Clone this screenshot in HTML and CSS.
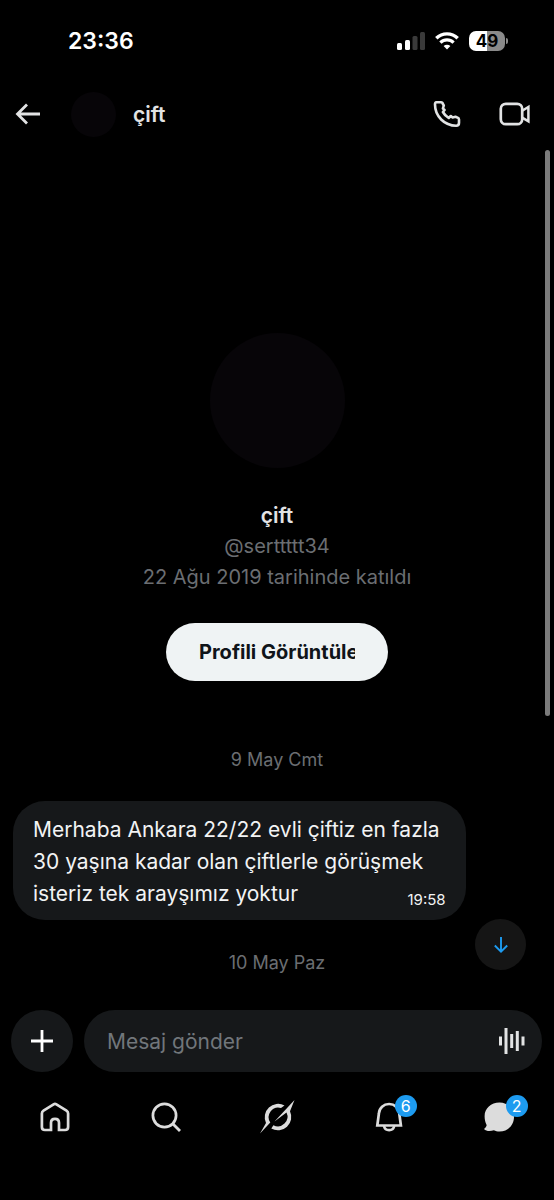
FILE: index.html
```html
<!DOCTYPE html>
<html lang="tr">
<head>
<meta charset="utf-8">
<meta name="viewport" content="width=device-width, initial-scale=1">
<title>çift</title>
<link rel="stylesheet" href="styles.css">
</head>
<body>
<div class="status">
  <time class="clock">23:36</time>
  <div class="status-icons">
    <svg class="signal" width="28" height="20" viewBox="0 0 28 20" aria-hidden="true">
      <rect x="0" y="12" width="5" height="7" rx="1.5" fill="#fff"/>
      <rect x="8" y="9" width="5" height="10" rx="1.5" fill="#fff"/>
      <rect x="15.500" y="5" width="5" height="14" rx="1.500" fill="#3a3a3a"/>
      <rect x="23" y="1" width="5" height="18" rx="1.500" fill="#3a3a3a"/>
    </svg>
    <svg class="wifi" width="24" height="18" viewBox="0 0 24 18" aria-hidden="true">
      <path d="M1.300 6.300a15.200 15.200 0 0 1 21.400 0" fill="none" stroke="#fff" stroke-width="3.400"/>
      <path d="M5.400 10.600a9.400 9.400 0 0 1 13.200 0" fill="none" stroke="#fff" stroke-width="3.200"/>
      <path d="M12 17.500l-3.400-3.500a4.900 4.900 0 0 1 6.800 0z" fill="#fff"/>
    </svg>
    <span class="battery">49</span>
  </div>
</div>

<header class="header">
  <button class="icon-button" type="button" aria-label="Geri">
    <svg width="28" height="28" viewBox="0 0 28 28"><path d="M26 14H4M13 4.500L3.500 14l9.500 9.500" fill="none" stroke="currentColor" stroke-width="2.800"/></svg>
  </button>
  <span class="avatar avatar-small"></span>
  <h1 class="title">çift</h1>
  <button class="icon-button call" type="button" aria-label="Sesli arama">
    <svg width="28" height="28" viewBox="0 0 28 28"><path d="M3.300 2.300H8C9.100 2.300 9.700 3 9.900 4L10.800 5.500L9.900 8.500L11.600 10L9.900 12C11.300 14.500 13.200 16.500 15.700 18L17.800 16L19.600 17.500L22.500 16.800L24.400 17.600C25.500 17.900 26 18.500 26 19.500V22.700C26 24.800 24.900 25.700 23.200 25.700C11.400 25.700 2 16.300 2 4.600C2 3.100 2.400 2.300 3.300 2.300Z" fill="none" stroke="currentColor" stroke-width="2.600" stroke-linejoin="round"/></svg>
  </button>
  <button class="icon-button" type="button" aria-label="Görüntülü arama">
    <svg width="32" height="28" viewBox="0 0 32 28"><rect x="1.800" y="3.800" width="21.400" height="20.400" rx="5" fill="none" stroke="currentColor" stroke-width="2.700"/><path d="M23.200 10.700L29.400 7V21.300L23.200 17.600" fill="none" stroke="currentColor" stroke-width="2.500"/></svg>
  </button>
</header>

<main class="chat">
  <section class="profile">
    <span class="avatar avatar-large"></span>
    <h2 class="name">çift</h2>
    <p class="meta">@serttttt34</p>
    <p class="meta">22 Ağu 2019 tarihinde katıldı</p>
    <button class="profile-button" type="button"><span class="profile-label">Profili Görüntüle</span></button>
  </section>
  <p class="date">9 May Cmt</p>
  <article class="bubble">
    <p class="message">Merhaba Ankara 22/22 evli çiftiz en fazla<br>30 yaşına kadar olan çiftlerle görüşmek<br>isteriz tek arayşımız yoktur</p>
    <time class="sent">19:58</time>
  </article>
  <p class="date">10 May Paz</p>
  <button class="jump" type="button" aria-label="En alta git">
    <svg width="16" height="18" viewBox="0 0 16 18"><path d="M8 1v14.500M1.800 9.500L8 15.700l6.200-6.200" fill="none" stroke="currentColor" stroke-width="1.900"/></svg>
  </button>
  <span class="scrollbar"></span>
</main>

<form class="composer">
  <button class="add" type="button" aria-label="Ekle">
    <svg width="24" height="24" viewBox="0 0 24 24"><path d="M12 1v22M1 12h22" stroke="currentColor" stroke-width="2.800"/></svg>
  </button>
  <div class="field">
    <input class="input" type="text" placeholder="Mesaj gönder" aria-label="Mesaj gönder">
    <button class="icon-button" type="button" aria-label="Sesli mesaj">
      <svg width="28" height="28" viewBox="0 0 28 28"><path d="M2.500 9.500v9M8 1v26M13.700 7v14M19.300 4v20M25 9.500v9" stroke="currentColor" stroke-width="3"/></svg>
    </button>
  </div>
</form>

<nav class="tabs">
  <a class="tab" href="#home" aria-label="Ana sayfa">
    <svg width="32" height="32" viewBox="0 0 32 32"><path d="M14.600 3.400L4.500 9.700C3.400 10.400 2.900 11.300 2.900 12.500V26C2.900 28 3.900 29 5.900 29H12V21.800C12 19.300 13.500 17.900 16 17.900S20 19.300 20 21.800V29H26.100C28.100 29 29.100 28 29.100 26V12.500C29.100 11.300 28.600 10.400 27.500 9.700L17.400 3.400C16.400 2.800 15.600 2.800 14.600 3.400Z" fill="none" stroke="currentColor" stroke-width="2.700"/></svg>
  </a>
  <a class="tab" href="#search" aria-label="Ara">
    <svg width="32" height="32" viewBox="0 0 32 32"><circle cx="14.500" cy="14.500" r="11.600" fill="none" stroke="currentColor" stroke-width="2.700"/><path d="M22.500 22.500l7.500 7.500" stroke="currentColor" stroke-width="2.900"/></svg>
  </a>
  <a class="tab" href="#grok" aria-label="Grok">
    <svg width="36" height="36" viewBox="0 0 36 36"><path d="M25.500 6.400A13.400 13.400 0 0 0 7 23.900L1 34.500L11.300 23.600A9.700 9.700 0 0 1 22 8.900Z" fill="currentColor"/><path d="M15.500 22.500L35.500 1L31 12.200A13.400 13.400 0 0 1 12.300 29.600L14.400 26.300A9.700 9.700 0 0 0 27.500 13.500Z" fill="currentColor"/></svg>
  </a>
  <a class="tab" href="#notifications" aria-label="Bildirimler, 6 yeni">
    <svg width="32" height="32" viewBox="0 0 32 32"><path d="M6.900 12.500C7.200 6.900 11.600 3 17.100 3S27 6.900 27.300 12.500L28.900 24.500H5.300Z" fill="none" stroke="currentColor" stroke-width="2.700"/><path d="M11.900 25C12.800 28.200 14.300 29.200 17.100 29.200S21.400 28.200 22.300 25" fill="none" stroke="currentColor" stroke-width="2.700"/></svg>
    <span class="badge">6</span>
  </a>
  <a class="tab" href="#messages" aria-label="Mesajlar, 2 yeni">
    <svg width="32" height="32" viewBox="0 0 32 32"><path d="M16.500 1.600C8 1.600 1.600 7.600 1.600 15.200C1.600 18.900 2.400 21.500 3.500 23.700C4 25 2.900 26.400 1 28C3.500 30.600 7.500 30.400 10.900 29.200C12.500 30 14.400 30.500 16.500 30.500C25 30.500 31 24 31 16S25 1.600 16.500 1.600Z" fill="currentColor"/></svg>
    <span class="badge">2</span>
  </a>
</nav>
</body>
</html>
```

FILE: styles.css
```css
* {
  box-sizing: border-box;
}

body {
  margin: 0;
  min-height: 100vh;
  display: flex;
  flex-direction: column;
  background: #000;
  color: #e2e3e4;
  font-family: Inter, Roboto, sans-serif;
  font-size: 21px;
}

h1,
h2,
p {
  margin: 0;
}

button {
  padding: 0;
  border: 0;
  background: none;
  color: inherit;
  font: inherit;
  cursor: pointer;
}

svg {
  display: block;
}

.status {
  display: flex;
  align-items: center;
  justify-content: space-between;
  height: 82px;
  padding: 0 49px 0 68px;
}

.clock {
  color: #fff;
  font-size: 23px;
  font-weight: 600;
}

.status-icons {
  display: flex;
  align-items: center;
  gap: 10px;
}

.battery {
  position: relative;
  width: 36px;
  height: 20px;
  border-radius: 7px;
  background: linear-gradient(90deg, #fff 50%, #8a8a8a 50%);
  color: #000;
  font-size: 17px;
  font-weight: 700;
  line-height: 20px;
  text-align: center;
}

.battery::after {
  content: "";
  position: absolute;
  top: 7px;
  right: -3px;
  width: 2px;
  height: 6px;
  border-radius: 0 2px 2px 0;
  background: #8a8a8a;
}

.header {
  display: flex;
  align-items: center;
  height: 64px;
  padding: 0 23px 0 14px;
}

.icon-button {
  flex: none;
}

.avatar {
  flex: none;
  border-radius: 50%;
  background: #070508;
}

.avatar-small {
  width: 45px;
  height: 45px;
  margin: 0 17px 0 29px;
}

.title,
.name {
  font-size: 21px;
  font-weight: 600;
}

.title {
  flex: 1;
}

.call {
  margin-right: 38px;
}

.chat {
  position: relative;
  flex: 1;
  display: flex;
  flex-direction: column;
  padding: 187px 13px 35px;
}

.profile {
  display: flex;
  flex-direction: column;
  align-items: center;
  line-height: 31px;
}

.avatar-large {
  width: 135px;
  height: 135px;
  margin-bottom: 32px;
}

.meta {
  color: #6b6e72;
  font-size: 20px;
}

.profile-button {
  width: 222px;
  height: 58px;
  margin-top: 30px;
  padding: 0 33px;
  border-radius: 29px;
  background: #eff3f4;
  color: #0f1419;
  font-size: 20px;
  font-weight: 700;
}

.profile-label {
  display: block;
  overflow: hidden;
  white-space: nowrap;
}

.date {
  color: #6b6e72;
  font-size: 18px;
  line-height: 24px;
  text-align: center;
}

.profile + .date {
  margin-top: 67px;
}

.bubble {
  align-self: flex-start;
  display: flex;
  align-items: flex-end;
  margin: 29px 0 31px;
  padding: 13px 20px 10px;
  border-radius: 32px;
  background: #16181a;
  color: #f2f3f4;
}

.message {
  line-height: 32px;
}

.sent {
  width: 40px;
  margin-left: -34px;
  font-size: 15px;
  line-height: 20px;
  text-align: right;
}

.jump {
  position: absolute;
  right: 28px;
  bottom: 40px;
  display: grid;
  place-items: center;
  width: 51px;
  height: 51px;
  border-radius: 50%;
  background: #151515;
  color: #1d9bf0;
}

.scrollbar {
  position: absolute;
  top: 4px;
  right: 4px;
  width: 5px;
  height: 566px;
  border-radius: 3px;
  background: #7b7b7b;
}

.composer {
  display: flex;
  gap: 11px;
  padding: 0 12px 0 11px;
}

.add {
  display: grid;
  place-items: center;
  flex: none;
  width: 62px;
  height: 62px;
  border-radius: 50%;
  background: #16181a;
  color: #fff;
}

.field {
  flex: 1;
  display: flex;
  align-items: center;
  height: 62px;
  padding: 0 16px 0 23px;
  border-radius: 31px;
  background: #16181a;
}

.input {
  flex: 1;
  min-width: 0;
  padding: 0;
  border: 0;
  outline: 0;
  background: none;
  color: #e7e9ea;
  font: inherit;
}

.input::placeholder {
  color: #71767b;
  opacity: 1;
}

.tabs {
  display: flex;
  padding: 27px 0 65px;
}

.tab {
  position: relative;
  flex: 1;
  display: grid;
  place-items: center;
  height: 36px;
  color: #dcdcdc;
  text-decoration: none;
}

.badge {
  position: absolute;
  top: -4px;
  left: calc(50% + 7px);
  width: 22px;
  height: 22px;
  border-radius: 50%;
  background: #1d9bf0;
  color: #fff;
  font-size: 16px;
  line-height: 22px;
  text-align: center;
}
```
